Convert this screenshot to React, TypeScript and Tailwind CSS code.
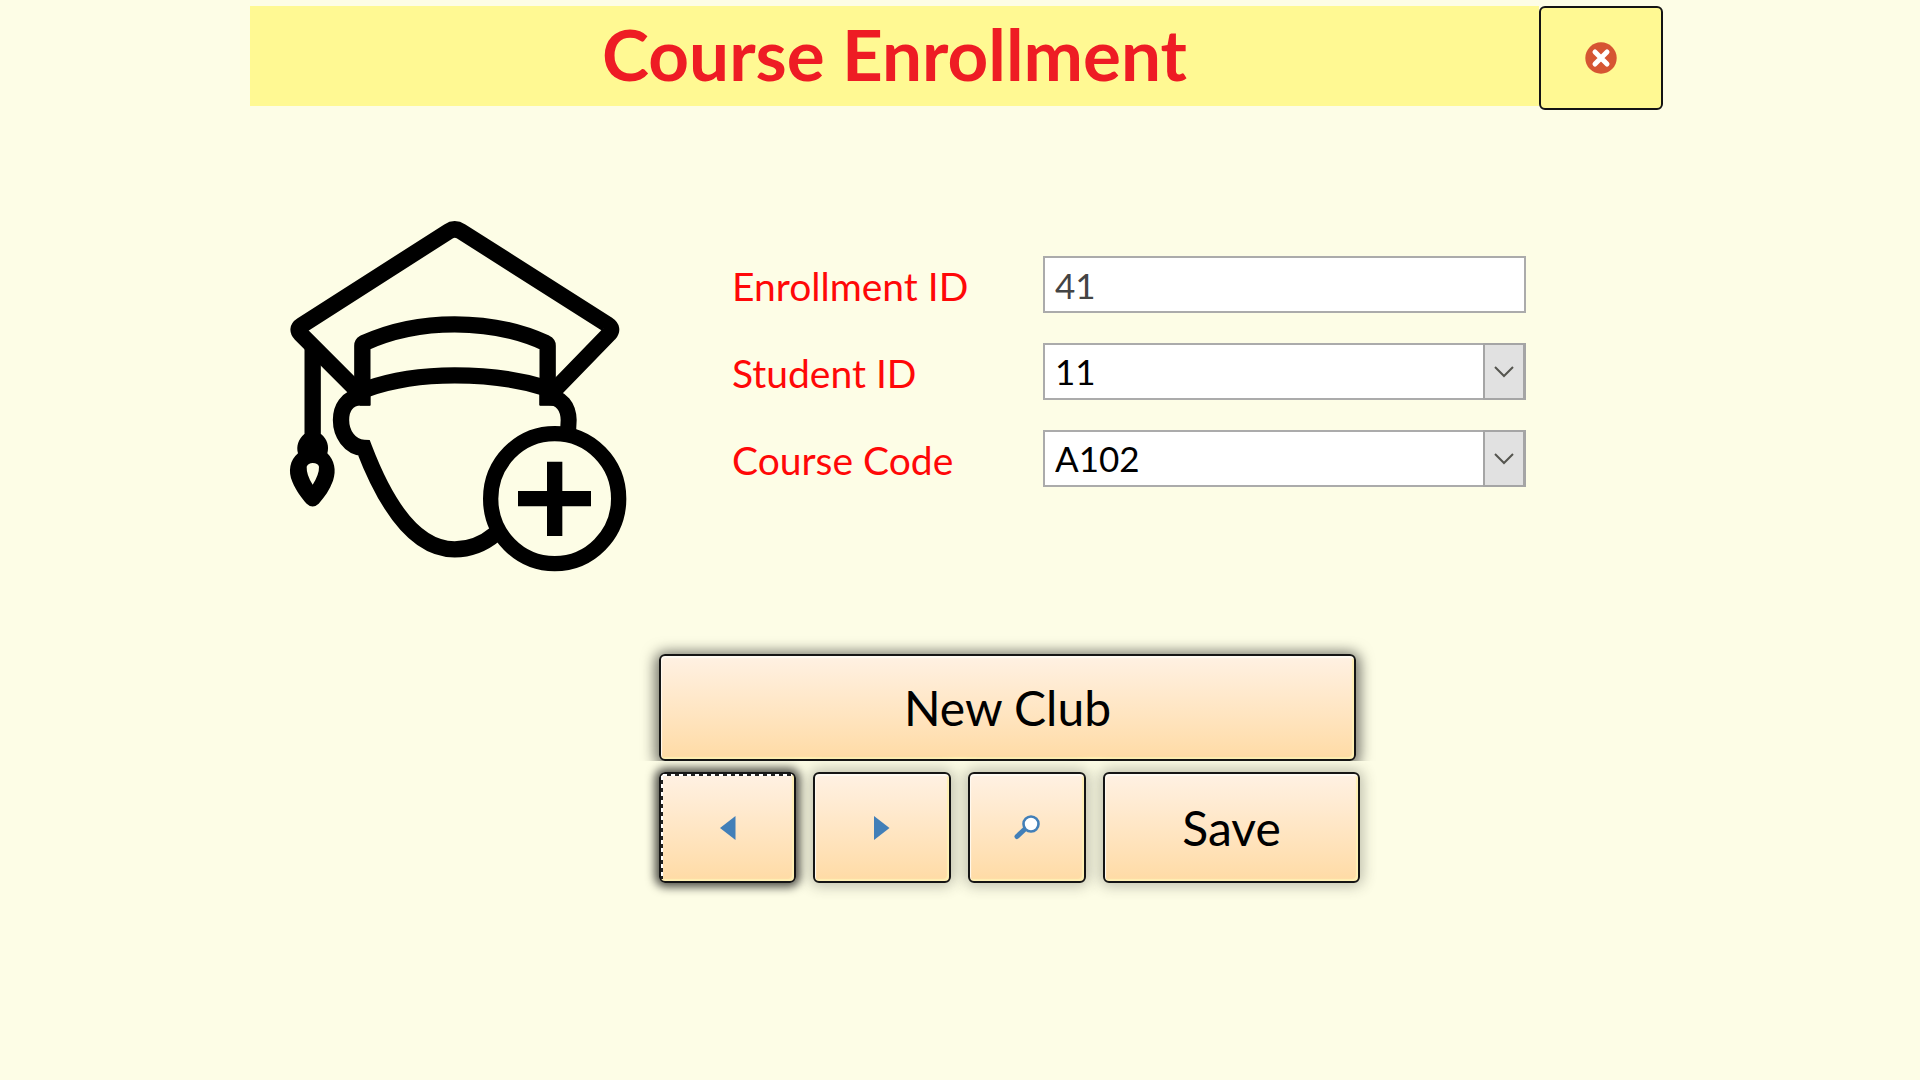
import React from "react";

const control =
  "h-[57px] w-full rounded-none border-2 border-[#ababab] bg-white pl-2.5 text-[35px] leading-none outline-none";

const label = "pt-1 text-[39px] leading-none text-[#ff0808]";

const action =
  "relative flex items-center justify-center rounded-md border-2 border-[#141414] bg-linear-to-b from-[#fff1e3] to-[#ffdba5] text-[48px] leading-none text-black";

const soft =
  "shadow-[0_0_14px_3px_rgba(60,60,50,0.32),inset_1px_2px_1px_#fffaf2,inset_-2px_-2px_1px_#fff0b4]";

function StudentIcon() {
  return (
    <svg viewBox="0 0 1140 1170" className="h-[390px] w-[380px] shrink-0" fill="none" stroke="#000" role="img" aria-label="Add student">
      <g strokeWidth="49" strokeLinejoin="round">
        <path d="M262 572 L92 402 Q78 387 95 376 L536 94 Q554 82 573 94 L1013 374 Q1031 386 1018 401 L852 572" />
        <path d="M277 616 V437 Q277 432 282 429 Q405 373 554 373 Q705 373 827 429 Q833 432 833 437 V616" strokeLinejoin="miter" />
        <path d="M290 567 Q405 526 554 526 Q705 526 821 562" />
        <path d="M128 435 V725" />
      </g>
      <path d="M300 591 H270 C230 594 213 625 213 660 C213 700 238 742 282 744 C334 880 420 1048 554 1048 C604 1048 642 1030 677 1001" strokeWidth="49" />
      <path d="M809 591 H835 C874 592 895 620 896 660 L894 700" strokeWidth="48" />
      <path d="M232 570 H301 V617 H270 Z M809 560 H880 L870 617 H809 Z" fill="#000" stroke="none" />
      <path fill="#000" stroke="none" fillRule="evenodd" d="M103 702 C85 718 78 739 84 760 C60 779 53 815 67 845 C79 873 94 893 110 911 Q128 928 146 911 C164 891 179 869 189 842 C200 812 193 780 172 760 C178 739 172 718 153 702 Z M110 800 Q115 789 128 789 Q144 789 147 800 Q148 822 128 854 Q109 824 110 800 Z" />
      <ellipse cx="854" cy="896" rx="192" ry="195" strokeWidth="46" fill="#fdfde6" />
      <path d="M744 896 H963 M854 785 V1008" strokeWidth="46" />
    </svg>
  );
}

function Dropdown({ id, value }: { id: string; value: string }) {
  return (
    <div className="relative">
      <select id={id} defaultValue={value} className={`${control} appearance-none text-black`}>
        <option>{value}</option>
      </select>
      <span className="pointer-events-none absolute inset-y-0 right-0 flex w-[43px] items-center justify-center border-2 border-r-3 border-[#a5a5a5] bg-[#e1e1e1]">
        <svg viewBox="0 0 20 12" className="h-3 w-5" fill="none" stroke="#55554f" strokeWidth="2">
          <path d="M1 1 L10 10 L19 1" />
        </svg>
      </span>
    </div>
  );
}

export default function App() {
  return (
    <div className="min-h-screen bg-[#fdfde6] font-['Century_Gothic','Lato',sans-serif]">
      <header className="flex items-start pt-1.5 pr-[257px] pl-[250px]">
        <div className="flex h-[100px] flex-1 items-center justify-center bg-[#fff993] pb-1.5">
          <h1 className="text-[71px] leading-none font-bold text-[#ee1c24]">Course Enrollment</h1>
        </div>
        <button type="button" aria-label="Close" className="flex h-[104px] w-[124px] items-center justify-center rounded-md border-2 border-[#141414] bg-[#fff993]">
          <svg viewBox="0 0 32 32" className="size-8">
            <circle cx="16" cy="16" r="15.7" fill="#d65532" />
            <path d="M10 10 L22 22 M22 10 L10 22" stroke="#fff" strokeWidth="5" strokeLinecap="round" />
          </svg>
        </button>
      </header>

      <main>
        <div className="flex items-start pt-[90px] pr-[394px] pl-[270px]">
          <StudentIcon />
          <form className="mt-14 ml-[82px] grid flex-1 grid-cols-[311px_1fr] items-center gap-y-[30px]">
            <label htmlFor="enrollment" className={label}>Enrollment ID</label>
            <input id="enrollment" readOnly value="41" className={`${control} text-[#444]`} />
            <label htmlFor="student" className={label}>Student ID</label>
            <Dropdown id="student" value="11" />
            <label htmlFor="course" className={label}>Course Code</label>
            <Dropdown id="course" value="A102" />
          </form>
        </div>

        <div className="mt-16 ml-[659px] w-[701px]">
          <button type="button" className={`${action} h-[107px] w-[697px] shadow-[0_2px_14px_4px_rgba(0,0,0,0.55),inset_1px_2px_1px_#fffaf2,inset_-2px_-2px_1px_#fff0b4] [clip-path:inset(-24px_-24px_0_-24px)]`}>
            New Club
          </button>
          <div className="mt-[11px] flex h-[111px] gap-[17px]">
            <button type="button" aria-label="Previous" className={`${action} w-[137px] shadow-[0_0_10px_4px_rgba(0,0,0,0.7),inset_-2px_-2px_1px_#fff0b4]`}>
              <span className="absolute inset-x-0.5 top-0 h-0.5 bg-[repeating-linear-gradient(90deg,#fff_0_4px,#222_4px_8px)]" />
              <span className="absolute inset-y-0.5 left-0 w-0.5 bg-[repeating-linear-gradient(180deg,#fff_0_4px,#222_4px_8px)]" />
              <svg viewBox="0 0 16 24" className="h-6 w-4" fill="#427fb8"><path d="M15.500 0 V24 L0 12 Z" /></svg>
            </button>
            <button type="button" aria-label="Next" className={`${action} ${soft} w-[138px]`}>
              <svg viewBox="0 0 16 24" className="h-6 w-4" fill="#427fb8"><path d="M0 0 V24 L15.500 12 Z" /></svg>
            </button>
            <button type="button" aria-label="Find" className={`${action} ${soft} w-[118px]`}>
              <svg viewBox="0 0 26 25" className="h-[25px] w-[26px]" stroke="#427fb8" fill="none">
                <path d="M3 21.500 L11 14" strokeWidth="5" strokeLinecap="round" />
                <circle cx="17" cy="9" r="7.500" strokeWidth="2.600" fill="#fff" />
              </svg>
            </button>
            <button type="button" className={`${action} ${soft} flex-1`}>Save</button>
          </div>
        </div>
      </main>
    </div>
  );
}
